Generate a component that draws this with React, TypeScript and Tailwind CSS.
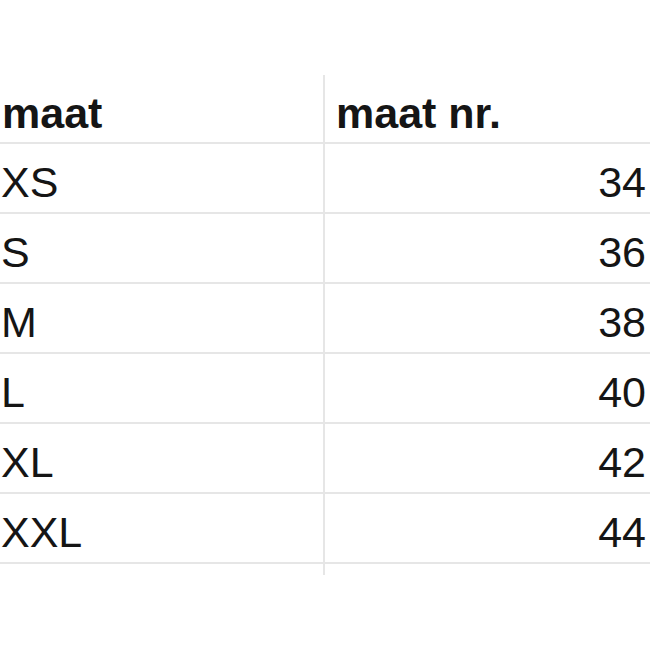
import React from 'react';

const rows: [string, number][] = [
  ['XS', 34],
  ['S', 36],
  ['M', 38],
  ['L', 40],
  ['XL', 42],
  ['XXL', 44],
];

const App: React.FC = () => {
  return (
    <div className="w-[650px] h-[650px] overflow-hidden bg-white pt-[75px] text-[#151515] font-['Liberation_Sans',Arial,sans-serif] text-[43px] leading-none">
      <div className="grid grid-cols-[323px_1fr]">
        {/* Header */}
        <div className="h-[69px] border-b-2 border-[#e6e6e6] pt-[17px] pl-[2px] font-bold">maat</div>
        <div className="h-[69px] border-b-2 border-l-2 border-[#e6e6e6] pt-[17px] pl-[11px] font-bold">maat nr.</div>

        {/* Rows */}
        {rows.map(([size, nr]) => (
          <React.Fragment key={size}>
            <div className="h-[70px] border-b-2 border-[#e6e6e6] pt-[17px] pl-[1px]">{size}</div>
            <div className="h-[70px] border-b-2 border-l-2 border-[#e6e6e6] pt-[17px] pr-[4px] text-right">{nr}</div>
          </React.Fragment>
        ))}

        <div className="h-[11px]" />
        <div className="h-[11px] border-l-2 border-[#e6e6e6]" />
      </div>
    </div>
  );
};

export default App;
